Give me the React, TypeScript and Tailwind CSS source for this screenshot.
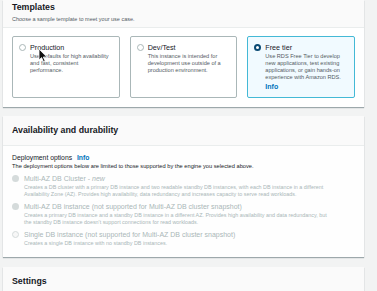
import React from 'react';

interface Tile {
  id: string;
  title: string;
  lines: string[];
  selected?: boolean;
}

interface Option {
  id: string;
  label: React.ReactNode;
  lines: string[];
  ring?: boolean;
}

const tiles: Tile[] = [
  { id: 'prod', title: 'Production', lines: ['Use defaults for high availability', 'and fast, consistent', 'performance.'] },
  { id: 'dev', title: 'Dev/Test', lines: ['This instance is intended for', 'development use outside of a', 'production environment.'] },
  {
    id: 'free',
    title: 'Free tier',
    lines: ['Use RDS Free Tier to develop', 'new applications, test existing', 'applications, or gain hands-on', 'experience with Amazon RDS.'],
    selected: true,
  },
];

const options: Option[] = [
  {
    id: 'cluster',
    label: (
      <>
        Multi-AZ DB Cluster - <span className="italic">new</span>
      </>
    ),
    lines: [
      'Creates a DB cluster with a primary DB instance and two readable standby DB instances, with each DB instance in a different',
      'Availability Zone (AZ). Provides high availability, data redundancy and increases capacity to serve read workloads.',
    ],
  },
  {
    id: 'multi',
    label: 'Multi-AZ DB instance (not supported for Multi-AZ DB cluster snapshot)',
    lines: [
      'Creates a primary DB instance and a standby DB instance in a different AZ. Provides high availability and data redundancy, but',
      "the standby DB instance doesn't support connections for read workloads.",
    ],
  },
  {
    id: 'single',
    label: 'Single DB instance (not supported for Multi-AZ DB cluster snapshot)',
    lines: ['Creates a single DB instance with no standby DB instances.'],
    ring: true,
  },
];

const Cursor = () => (
  <svg className="absolute left-[35px] top-[48px]" width="10" height="15" viewBox="0 0 10 15">
    <path d="M1 1 L1 12 L3.6 9.6 L5.6 14 L7.2 13.2 L5.3 9 L8.8 9 Z" fill="#111" stroke="#fff" strokeWidth="0.8" />
  </svg>
);

const App: React.FC = () => {
  return (
    <div
      className="w-[377px] h-[291px] overflow-hidden bg-[#f2f3f3] pl-[3px] flex flex-col gap-[9px] text-[#16191f]"
      style={{ fontFamily: '"Liberation Sans", Arial, sans-serif' }}
    >
      {/* Templates */}
      <div className="relative w-[361px] bg-white shadow-[0_1px_1px_0_rgba(0,28,36,0.35)]">
        <div className="h-[28px] bg-[#fafafa] border-b border-[#eaeded] px-[9px] pt-[2px]">
          <h2 className="text-[8.8px] leading-[11px] font-bold">Templates</h2>
          <p className="text-[5.5px] leading-[8px] text-[#545b64] mt-[2px]">Choose a sample template to meet your use case.</p>
        </div>
        <div className="grid grid-cols-3 gap-[10px] px-[9px] pt-[8px] pb-[9px]">
          {tiles.map((t) => (
            <div
              key={t.id}
              className={`h-[62px] rounded-[2px] border flex gap-[4px] pl-[6px] pt-[6px] ${
                t.selected ? 'bg-[#f1faff] border-[#44b9d6]' : 'bg-white border-[#aab7b8]'
              }`}
            >
              <div
                className={`mt-[1px] w-[7px] h-[7px] shrink-0 rounded-full bg-white ${
                  t.selected ? 'border-[2px] border-[#0a4a74]' : 'border border-[#aab7b8]'
                }`}
              />
              <div>
                <div className="text-[7.2px] leading-[9px]">{t.title}</div>
                <div className="text-[5.6px] leading-[7px] text-[#545b64] mt-[1px]">
                  {t.lines.map((l) => (
                    <div key={l}>{l}</div>
                  ))}
                </div>
                {t.selected && <div className="text-[7px] leading-[9px] font-bold text-[#0073bb] mt-[1px]">Info</div>}
              </div>
            </div>
          ))}
        </div>
        <Cursor />
      </div>

      {/* Availability and durability */}
      <div className="w-[361px] bg-[#fefefe] shadow-[0_1px_1px_0_rgba(0,28,36,0.35)]">
        <div className="h-[30px] bg-[#fafafa] border-b border-[#eaeded] px-[9px] flex items-center">
          <h2 className="text-[8.8px] leading-[11px] font-bold">Availability and durability</h2>
        </div>
        <div className="px-[9px] pt-[7px] pb-[10px]">
          <div className="text-[6.8px] leading-[9px]">
            Deployment options <span className="ml-[3px] font-bold text-[#0073bb]">Info</span>
          </div>
          <p className="text-[5.7px] leading-[8px]">
            The deployment options below are limited to those supported by the engine you selected above.
          </p>
          <div className="flex flex-col gap-[4px] mt-[4px] text-[#aab7b8]">
            {options.map((o) => (
              <div key={o.id} className="flex gap-[5px]">
                <div
                  className={`mt-[1px] w-[7px] h-[7px] shrink-0 rounded-full ${
                    o.ring ? 'border-[1.5px] border-[#d5dbdb] bg-[#f7f7f7]' : 'bg-[#d5dbdb]'
                  }`}
                />
                <div>
                  <div className="text-[7px] leading-[9px]">{o.label}</div>
                  <div className="text-[5.4px] leading-[7px] mt-[1px]">
                    {o.lines.map((l) => (
                      <div key={l} className="whitespace-nowrap">
                        {l}
                      </div>
                    ))}
                  </div>
                </div>
              </div>
            ))}
          </div>
        </div>
      </div>

      {/* Settings */}
      <div className="w-[361px] mt-[1px] bg-white shadow-[0_1px_1px_0_rgba(0,28,36,0.35)]">
        <div className="h-[30px] bg-[#fafafa] border-b border-[#eaeded] px-[9px] flex items-center">
          <h2 className="text-[8.8px] leading-[11px] font-bold">Settings</h2>
        </div>
      </div>
    </div>
  );
};

export default App;
